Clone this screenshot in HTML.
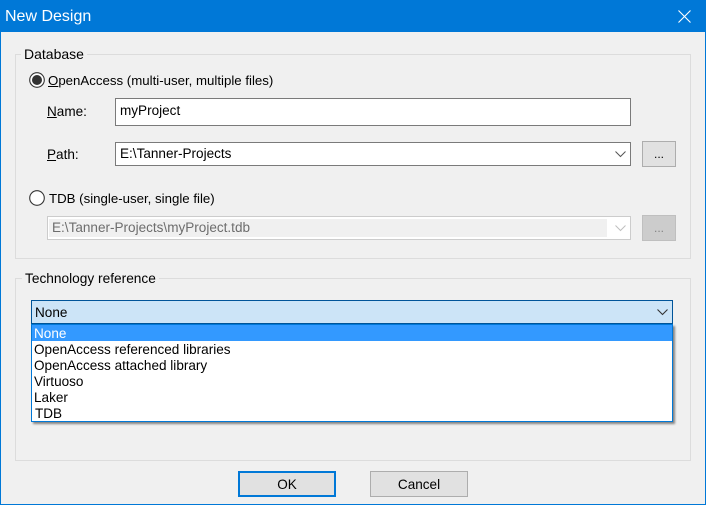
<!DOCTYPE html>
<html><head><meta charset="utf-8"><style>
html,body{margin:0;padding:0;width:706px;height:505px;overflow:hidden;background:#f0f0f0}
body{position:relative;font-family:"Liberation Sans",sans-serif;font-size:13.55px;color:#000}
div,span.t{position:absolute;box-sizing:border-box;white-space:nowrap}
.t{line-height:16px}
.group{border:1px solid #dcdcdc}
.btn{background:#e1e1e1;border:1px solid #adadad;text-align:center}
u{text-decoration:underline}
svg{position:absolute}
</style></head><body>
<div style="left:0;top:0;width:706px;height:505px;border:1px solid #0078d7;border-top:none"></div>
<div style="left:0;top:0;width:706px;height:32px;background:#0078d7"></div>
<div class="t" style="left:5px;top:9px;color:#fff;font-size:16px">New Design</div>
<svg style="left:678px;top:10px" width="13" height="13"><path d="M0.5 0.5L12.5 12.5M12.5 0.5L0.5 12.5" stroke="#fff" stroke-width="1.1" fill="none"/></svg>

<div class="group" style="left:15px;top:54px;width:676px;height:205px"></div>
<div class="t" style="left:21px;top:46px;background:#f0f0f0;padding:0 3px;font-size:14px">Database</div>

<svg style="left:29px;top:72px" width="16" height="16"><circle cx="8" cy="8" r="7.3" fill="#fff" stroke="#333" stroke-width="1.1"/><circle cx="8" cy="8" r="5" fill="#333"/></svg>
<div class="t" style="left:48px;top:73px;font-size:13.25px"><u>O</u>penAccess (multi-user, multiple files)</div>
<div class="t" style="left:47px;top:104px"><u>N</u>ame:</div>
<div style="left:115px;top:98px;width:516px;height:28px;background:#fff;border:1px solid #7a7a7a"></div>
<div class="t" style="left:120px;top:103px">myProject</div>
<div class="t" style="left:47px;top:147px"><u>P</u>ath:</div>
<div style="left:115px;top:142px;width:516px;height:24px;background:#fff;border:1px solid #7a7a7a"></div>
<div class="t" style="left:120px;top:146px">E:\Tanner-Projects</div>
<svg style="left:615px;top:151px" width="11" height="7"><path d="M0.5 0.5L5.5 5.5L10.500 0.5" stroke="#555" fill="none"/></svg>
<div class="btn" style="left:642px;top:141px;width:34px;height:26px;font-size:12px;line-height:25px">...</div>

<svg style="left:29px;top:190px" width="16" height="16"><circle cx="8" cy="8" r="7.3" fill="#fff" stroke="#333" stroke-width="1.1"/></svg>
<div class="t" style="left:49px;top:191px;font-size:13.25px">TDB (single-user, single file)</div>
<div style="left:47px;top:216px;width:584px;height:24px;background:#fff;border:1px solid #ccc"></div>
<div style="left:49px;top:219px;width:558px;height:18px;background:#f0f0f0"></div>
<div class="t" style="left:52px;top:220px;color:#6d6d6d">E:\Tanner-Projects\myProject.tdb</div>
<svg style="left:615px;top:225px" width="11" height="7"><path d="M0.5 0.5L5.5 5.5L10.500 0.5" stroke="#bfbfbf" fill="none"/></svg>
<div class="btn" style="left:642px;top:215px;width:34px;height:26px;background:#ccc;border-color:#bfbfbf;color:#838383;font-size:12px;line-height:25px">...</div>

<div class="group" style="left:15px;top:278px;width:676px;height:183px"></div>
<div class="t" style="left:22px;top:271px;background:#f0f0f0;padding:0 3px;font-size:13.7px">Technology reference</div>

<div style="left:31px;top:300px;width:642px;height:24px;background:#cce4f7;border:1px solid #005499"></div>
<div class="t" style="left:35px;top:305px">None</div>
<svg style="left:657px;top:309px" width="11" height="7"><path d="M0.500 0.500L5.500 5.500L10.500 0.500" stroke="#333" stroke-width="1.100" fill="none"/></svg>

<div style="left:31px;top:324px;width:642px;height:98px;background:#fff;border:1px solid #0078d7;box-shadow:2px 2px 2px rgba(0,0,0,.45)"></div>
<div style="left:32px;top:325px;width:640px;height:16px;background:#3399ff"></div>
<div class="t" style="left:34px;top:326px;color:#fff">None</div>
<div class="t" style="left:34px;top:342px">OpenAccess referenced libraries</div>
<div class="t" style="left:34px;top:358px">OpenAccess attached library</div>
<div class="t" style="left:34px;top:374px">Virtuoso</div>
<div class="t" style="left:34px;top:390px">Laker</div>
<div class="t" style="left:35px;top:406px">TDB</div>

<div class="btn" style="left:238px;top:471px;width:98px;height:26px;border:2px solid #0078d7;line-height:24px">OK</div>
<div class="btn" style="left:370px;top:471px;width:98px;height:26px;line-height:26px">Cancel</div>
</body></html>
